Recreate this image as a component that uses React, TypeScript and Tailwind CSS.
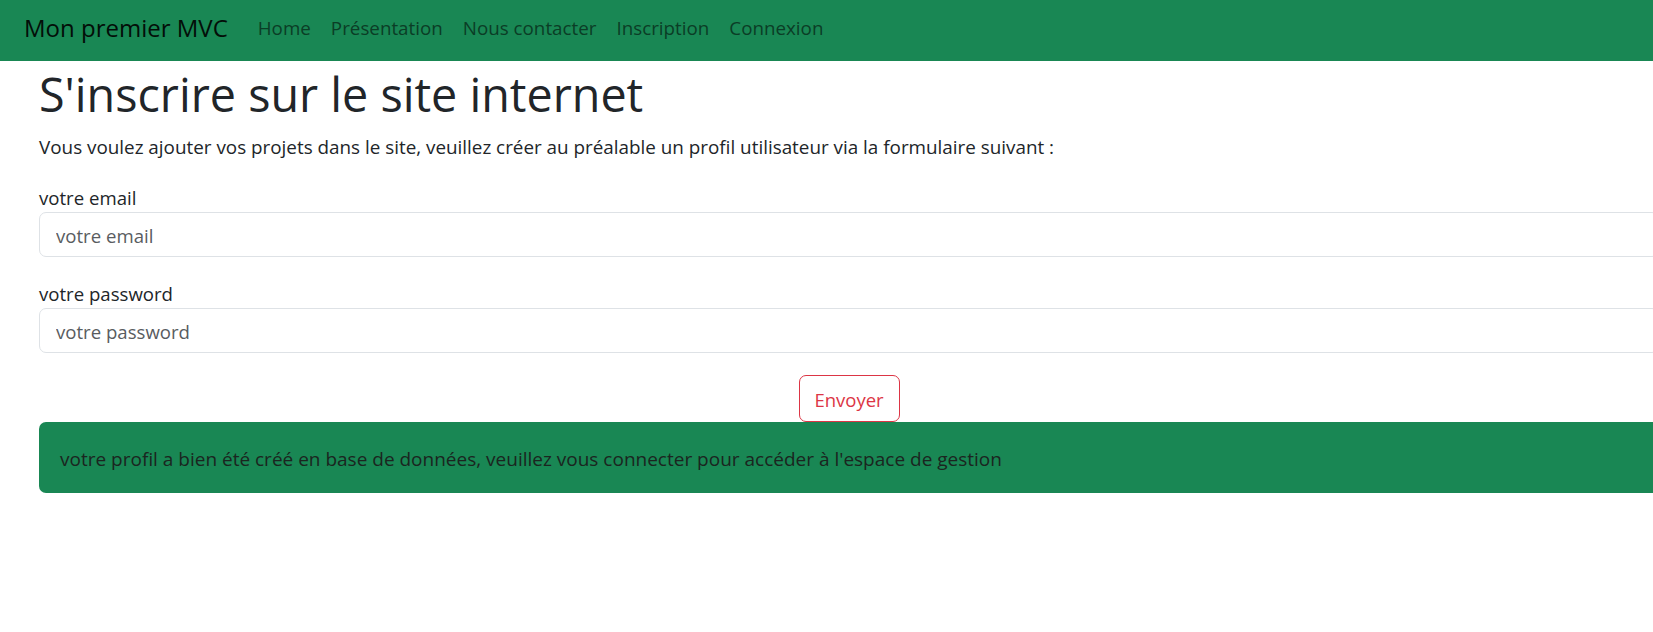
const links = ['Home', 'Présentation', 'Nous contacter', 'Inscription', 'Connexion']

export default function App() {
  return (
    <div className="min-h-[632px] w-full overflow-hidden bg-white font-['Open_Sans',sans-serif] text-[#212529]">
      {/* Navbar */}
      <nav className="flex h-[61px] items-center bg-[#198754] pb-[6px] pl-[24px]">
        <a href="#" className="mr-[20px] text-[24px] leading-[36px] text-[#030e08]">
          Mon premier MVC
        </a>
        <ul className="flex items-center">
          {links.map((l) => (
            <li key={l}>
              <a href="#" className="block px-[10px] text-[18.8px] leading-[28px] text-[#0b3d26]">
                {l}
              </a>
            </li>
          ))}
        </ul>
      </nav>

      <main className="w-[1620px] ml-[39px]">
        <h1 className="mt-[5px] text-[46.7px] leading-[56px] font-normal">S'inscrire sur le site internet</h1>
        <p className="mt-[11px] text-[18.85px] leading-[28px]">
          Vous voulez ajouter vos projets dans le site, veuillez créer au préalable un profil utilisateur via la formulaire suivant :
        </p>

        <form className="mt-[23px]" onSubmit={(e) => e.preventDefault()}>
          <label className="block text-[18.6px] leading-[28px]">votre email</label>
          <input
            type="email"
            placeholder="votre email"
            className="block h-[45px] w-full rounded-[7px] border border-[#dee2e6] px-[16px] pt-[2px] text-[18.6px] outline-none placeholder:text-[#595c5f]"
          />

          <label className="mt-[23px] block text-[18.6px] leading-[28px]">votre password</label>
          <input
            type="password"
            placeholder="votre password"
            className="block h-[45px] w-full rounded-[7px] border border-[#dee2e6] px-[16px] pt-[2px] text-[18.6px] outline-none placeholder:text-[#595c5f]"
          />

          <div className="mt-[22px] flex justify-center">
            <button
              type="submit"
              className="flex h-[47px] w-[101px] items-center justify-center rounded-[7px] border border-[#dc3545] pt-[2px] text-[18.5px] text-[#dc3545]"
            >
              Envoyer
            </button>
          </div>
        </form>

        <div className="h-[71px] rounded-[7px] bg-[#198754] pl-[21px] pt-[23px] text-[19px] leading-[28px] text-[#1b2520]">
          votre profil a bien été créé en base de données, veuillez vous connecter pour accéder à l'espace de gestion
        </div>
      </main>
    </div>
  )
}
